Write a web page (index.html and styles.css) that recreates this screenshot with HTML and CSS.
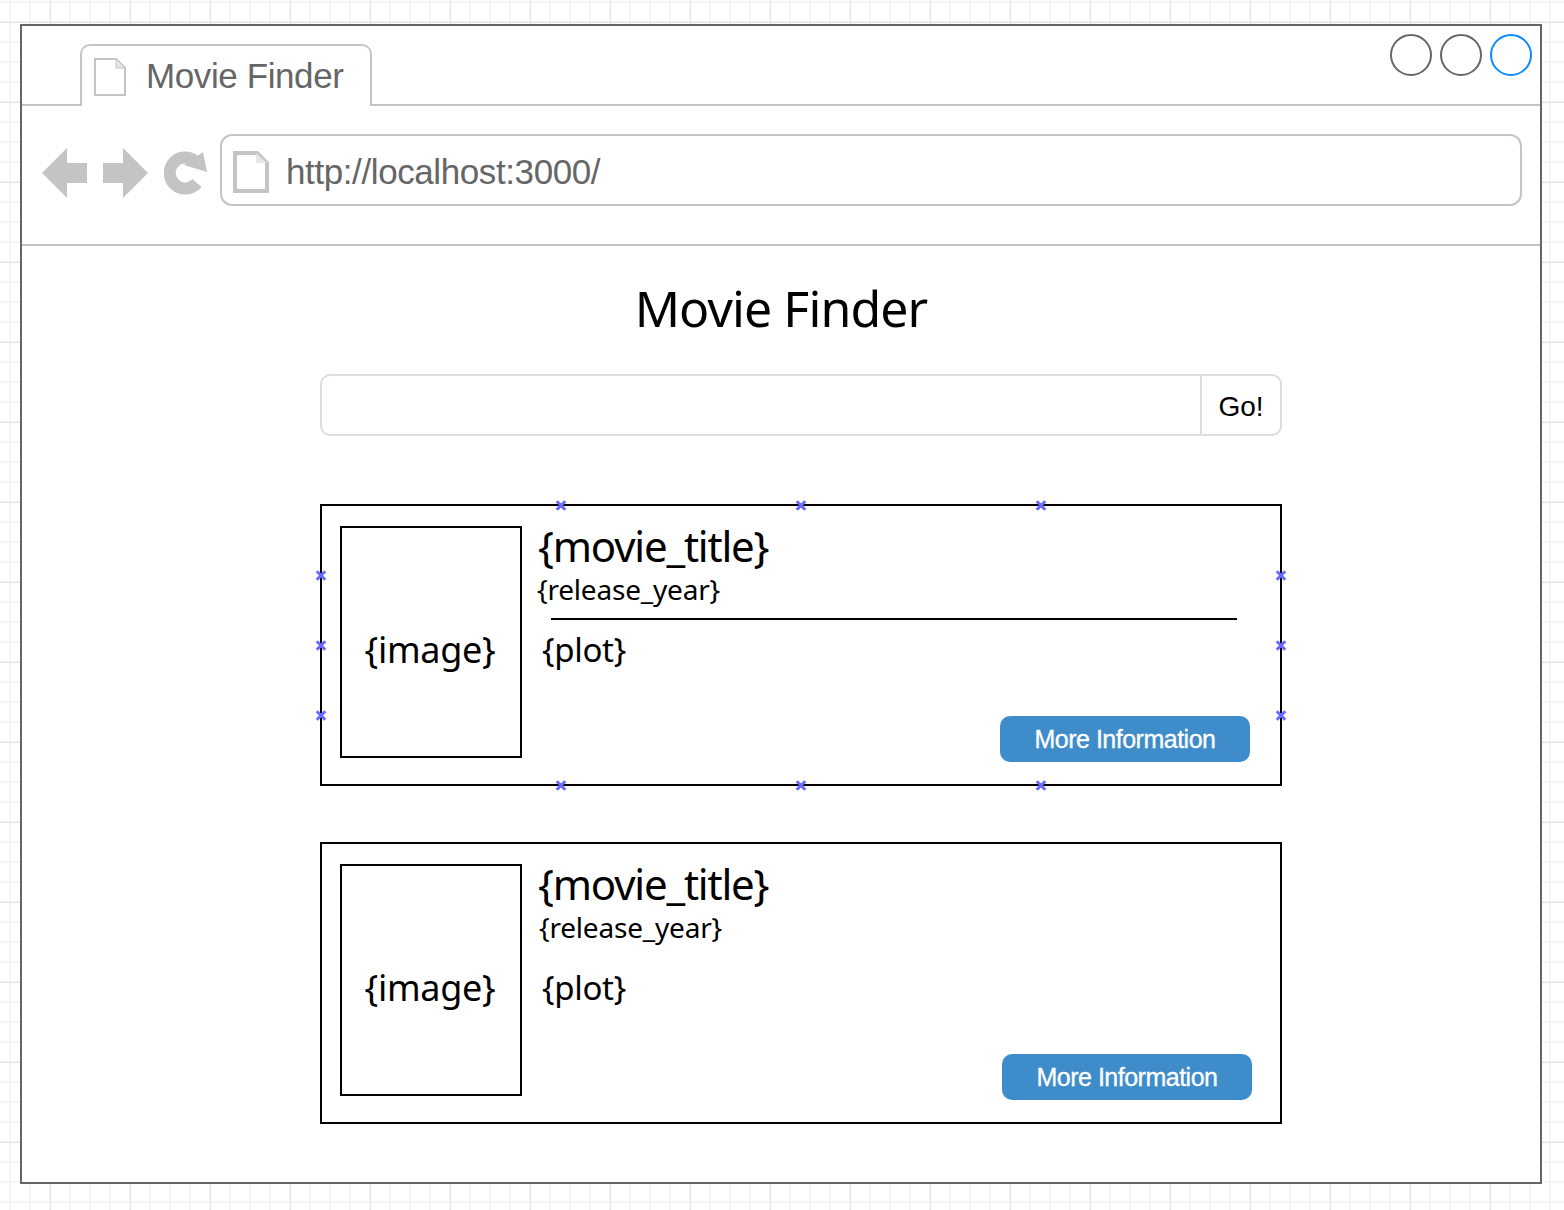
FILE: index.html
```html
<!DOCTYPE html>
<html lang="en">
<head>
    <meta charset="UTF-8">
    <meta name="viewport" content="width=device-width, initial-scale=1.0">
    <title>Movie Finder</title>
    <link rel="stylesheet" href="styles.css">
</head>
<body>
    <div class="window">
        <div class="tabbar">
            <div class="tab">
                <svg class="tab-icon" width="34" height="40" viewBox="0 0 34 40">
                    <path d="M2 2H23L32 11V38H2Z" fill="none" stroke="#c4c4c4" stroke-width="2"/>
                    <path d="M23 2L32 11H23Z" fill="#e6e6e6" stroke="#c4c4c4" stroke-width="1"/>
                </svg>
                <span class="tab-title">Movie Finder</span>
            </div>
            <div class="controls">
                <span class="control"></span>
                <span class="control"></span>
                <span class="control control-active"></span>
            </div>
        </div>

        <div class="toolbar">
            <svg class="nav-icon" width="46" height="52" viewBox="0 0 46 52">
                <path d="M0 26L25 1V16H45V36H25V51Z" fill="#c4c4c4"/>
            </svg>
            <svg class="nav-icon" width="46" height="52" viewBox="0 0 46 52">
                <path d="M45 26L20 1V16H0V36H20V51Z" fill="#c4c4c4"/>
            </svg>
            <svg class="nav-icon" width="44" height="52" viewBox="0 0 44 52">
                <path d="M33 36A15.500 15.500 0 1 1 31 14" fill="none" stroke="#c4c4c4" stroke-width="12"/>
                <path d="M39 5L43 25L20 18Z" fill="#c4c4c4"/>
            </svg>
            <div class="address">
                <svg class="address-icon" width="36" height="42" viewBox="0 0 36 42">
                    <path d="M2 2H24L34 12V40H2Z" fill="none" stroke="#c4c4c4" stroke-width="4"/>
                    <path d="M23 2L34 12H23Z" fill="#e6e6e6"/>
                </svg>
                <span class="address-text">http://localhost:3000/</span>
            </div>
        </div>

        <main class="page">
            <h1 class="page-title">Movie Finder</h1>

            <div class="content">
                <div class="search">
                    <div class="search-input"></div>
                    <div class="search-go">Go!</div>
                </div>

                <section class="card">
                    <div class="card-image">{image}</div>
                    <div class="card-body">
                        <div class="card-title">{movie_title}</div>
                        <div class="card-year">{release_year}</div>
                        <div class="card-rule"></div>
                        <div class="card-plot">{plot}</div>
                        <a class="card-button">More Information</a>
                    </div>
                    <span class="handle top col-1"></span>
                    <span class="handle top col-2"></span>
                    <span class="handle top col-3"></span>
                    <span class="handle bottom col-1"></span>
                    <span class="handle bottom col-2"></span>
                    <span class="handle bottom col-3"></span>
                    <span class="handle left row-1"></span>
                    <span class="handle left row-2"></span>
                    <span class="handle left row-3"></span>
                    <span class="handle right row-1"></span>
                    <span class="handle right row-2"></span>
                    <span class="handle right row-3"></span>
                </section>

                <section class="card card-plain">
                    <div class="card-image">{image}</div>
                    <div class="card-body">
                        <div class="card-title">{movie_title}</div>
                        <div class="card-year">{release_year}</div>
                        <div class="card-rule"></div>
                        <div class="card-plot">{plot}</div>
                        <a class="card-button">More Information</a>
                    </div>
                </section>
            </div>
        </main>
    </div>
</body>
</html>
```

FILE: styles.css
```css
* {
    box-sizing: border-box;
}
body {
    margin: 0;
    padding: 24px 0 26px 20px;
    font-family: "Noto Sans", sans-serif;
    color: #000;
    background-color: #fff;
    background-image:
        linear-gradient(to right, #e2e2e2 1px, transparent 1px),
        linear-gradient(to bottom, #e2e2e2 1px, transparent 1px),
        linear-gradient(to right, #f5f5f5 2px, transparent 2px),
        linear-gradient(to bottom, #f5f5f5 2px, transparent 2px);
    background-size: 80px 80px, 80px 80px, 20px 20px, 20px 20px;
    background-position: 50px 0, 0 22px, 9px 0, 0 1px;
}
.window {
    width: 1522px;
    height: 1160px;
    background-color: #fff;
    border: 2px solid #666;
}

/* browser chrome */
.tabbar {
    display: flex;
    align-items: flex-start;
    height: 80px;
    padding: 18px 8px 0 58px;
    border-bottom: 2px solid #c4c4c4;
}
.tab {
    display: flex;
    align-items: center;
    width: 292px;
    height: 62px;
    padding: 2px 0 0 11px;
    background-color: #fff;
    border: 2px solid #c4c4c4;
    border-bottom: none;
    border-radius: 10px 10px 0 0;
}
.tab-icon {
    margin-right: 19px;
}
.tab-title {
    margin-top: -3px;
    font-family: "Liberation Sans", Arial, sans-serif;
    font-size: 35px;
    letter-spacing: -0.4px;
    color: #666;
}
.controls {
    display: flex;
    gap: 8px;
    margin: -10px 0 0 auto;
}
.control {
    width: 42px;
    height: 42px;
    border: 2px solid #666;
    border-radius: 50%;
}
.control-active {
    border-color: #0a8cff;
}
.toolbar {
    display: flex;
    align-items: flex-start;
    height: 140px;
    padding: 28px 18px 0 20px;
    border-bottom: 2px solid #c4c4c4;
}
.nav-icon {
    flex: none;
    margin: 13px 15px 0 0;
}
.address {
    display: flex;
    align-items: center;
    flex: 1;
    height: 72px;
    margin-left: -3px;
    padding: 4px 0 0 11px;
    border: 2px solid #c4c4c4;
    border-radius: 12px;
}
.address-icon {
    margin: 0 17px 0 0;
}
.address-text {
    font-family: "Liberation Sans", Arial, sans-serif;
    font-size: 35px;
    letter-spacing: -0.4px;
    color: #666;
}

/* page */
.page-title {
    margin: 0;
    padding-top: 30px;
    font-size: 50px;
    font-weight: normal;
    letter-spacing: -0.9px;
    line-height: 64px;
    text-align: center;
}
.content {
    width: 962px;
    margin: 34px 0 0 298px;
}
.search {
    display: flex;
    height: 62px;
    border: 2px solid #ddd;
    border-radius: 10px;
}
.search-input {
    flex: 1;
}
.search-go {
    width: 80px;
    border-left: 2px solid #ddd;
    font-family: "Liberation Sans", Arial, sans-serif;
    font-size: 28px;
    line-height: 61px;
    text-align: center;
}
.card {
    position: relative;
    display: flex;
    margin-top: 68px;
    padding: 20px 28px 22px 18px;
    border: 2px solid #000;
}
.card-plain {
    margin-top: 56px;
}
.card-image {
    flex: none;
    width: 182px;
    height: 232px;
    padding-right: 2px;
    border: 2px solid #000;
    font-size: 36px;
    letter-spacing: -0.3px;
    line-height: 244px;
    text-align: center;
}
.card-body {
    display: flex;
    flex-direction: column;
    flex: 1;
    height: 236px;
}
.card-title {
    margin: -2px 0 0 16px;
    font-size: 42px;
    letter-spacing: -1.2px;
    line-height: 44px;
}
.card-year {
    margin: 1px 0 0 15px;
    font-size: 28px;
    letter-spacing: -0.2px;
    line-height: 40px;
}
.card-plain .card-year {
    margin-left: 17px;
}
.card-rule {
    height: 2px;
    width: 686px;
    margin: 9px 0 0 29px;
    background-color: #000;
}
.card-plain .card-rule {
    background-color: transparent;
}
.card-plot {
    margin: 10px 0 0 20px;
    font-size: 33px;
    letter-spacing: -0.3px;
    line-height: 40px;
}
.card-button {
    align-self: flex-end;
    width: 250px;
    height: 46px;
    margin: auto 2px 0 0;
    background-color: #3f8ccb;
    border-radius: 10px;
    color: #fff;
    font-family: "Liberation Sans", Arial, sans-serif;
    font-size: 25px;
    letter-spacing: -0.5px;
    line-height: 47px;
    text-align: center;
    -webkit-text-stroke: 0.3px #fff;
}
.card-plain .card-button {
    margin-right: 0;
}

/* selection handles on the first card */
.handle {
    position: absolute;
    width: 12px;
    height: 12px;
}
.handle::before,
.handle::after {
    content: "";
    position: absolute;
    top: 4.500px;
    left: 0;
    width: 12px;
    height: 3px;
    background-color: #6a6aff;
    transform: rotate(45deg);
}
.handle::after {
    transform: rotate(-45deg);
}
.top { top: -7px; }
.bottom { top: 273px; }
.left { left: -7px; }
.right { left: 953px; }
.col-1 { left: 233px; }
.col-2 { left: 473px; }
.col-3 { left: 713px; }
.row-1 { top: 63px; }
.row-2 { top: 133px; }
.row-3 { top: 203px; }
```
